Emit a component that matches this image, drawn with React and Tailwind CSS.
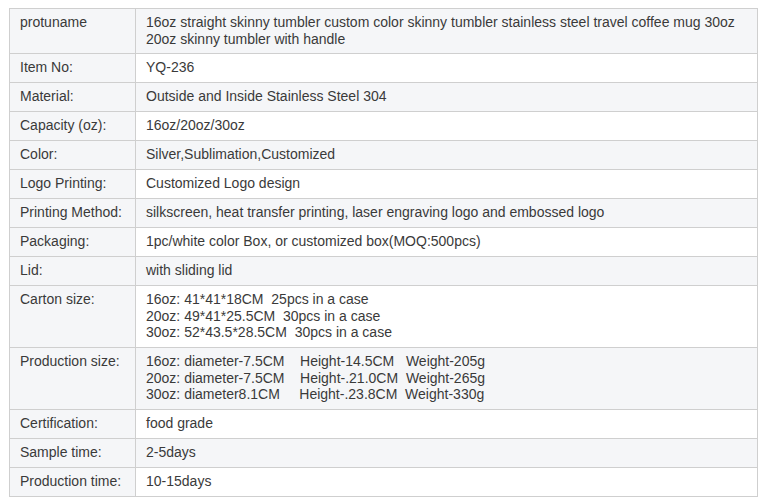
import React from "react";

const rows = [
  ["protuname", ["16oz straight skinny tumbler custom color skinny tumbler stainless steel travel coffee mug 30oz 20oz skinny tumbler with handle"], "h-[45px]"],
  ["Item No:", ["YQ-236"]],
  ["Material:", ["Outside and Inside Stainless Steel 304"]],
  ["Capacity (oz):", ["16oz/20oz/30oz"]],
  ["Color:", ["Silver,Sublimation,Customized"]],
  ["Logo Printing:", ["Customized Logo design"]],
  ["Printing Method:", ["silkscreen, heat transfer printing, laser engraving logo and embossed logo"]],
  ["Packaging:", ["1pc/white color Box, or customized box(MOQ:500pcs)"]],
  ["Lid:", ["with sliding lid"]],
  ["Carton size:", [
    "16oz: 41*41*18CM  25pcs in a case",
    "20oz: 49*41*25.5CM  30pcs in a case",
    "30oz: 52*43.5*28.5CM  30pcs in a case",
  ], "h-[62px]"],
  ["Production size:", [
    "16oz: diameter-7.5CM    Height-14.5CM   Weight-205g",
    "20oz: diameter-7.5CM    Height-.21.0CM  Weight-265g",
    "30oz: diameter8.1CM     Height-.23.8CM  Weight-330g",
  ], "h-[62px]"],
  ["Certification:", ["food grade"]],
  ["Sample time:", ["2-5days"]],
  ["Production time:", ["10-15days"]],
];

export default function App() {
  return (
    <div className="w-[773px] h-[503px] bg-white pt-[8px] pl-[9px]" style={{ fontFamily: '"Liberation Sans", Arial, sans-serif' }}>
      <table className="border-collapse w-[749px] text-[14px] text-[#3a3a3a] table-fixed">
        <colgroup>
          <col className="w-[126px]" />
          <col />
        </colgroup>
        <tbody>
          {rows.map(([label, lines, h], i) => (
            <tr key={i} className={h || "h-[29px]"}>
              <td className="border border-[#cfcfcf] bg-[#f5f6f8] align-top pl-[10px] pr-[4px] pt-[5px] pb-[5px] leading-[16.5px] whitespace-nowrap">{label}</td>
              <td className={`border border-[#cfcfcf] align-top pl-[10px] pr-[10px] pt-[5px] pb-[5px] leading-[16.5px] ${i % 2 === 0 ? "bg-[#f5f6f8]" : "bg-white"}`}>
                {lines.map((l, j) => (
                  <div key={j} className={lines.length > 1 && i !== 0 ? "whitespace-pre" : ""}>{l}</div>
                ))}
              </td>
            </tr>
          ))}
        </tbody>
      </table>
    </div>
  );
}
